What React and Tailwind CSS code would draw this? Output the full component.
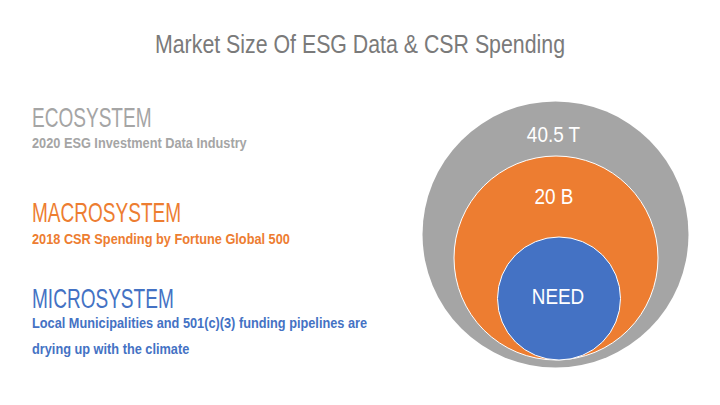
// App.jsx
import React from "react";

const font = { fontFamily: '"Liberation Sans", Arial, sans-serif' };

const Section = ({ title, color, topGap, subGap, children }) => (
  <div className={topGap}>
    <h2 className={`origin-left scale-x-[0.68] text-[28px] leading-none font-normal whitespace-nowrap ${color}`}>
      {title}
    </h2>
    <div className={`origin-left scale-x-[0.85] text-[15px] font-bold whitespace-nowrap ${subGap} ${color}`}>
      {children}
    </div>
  </div>
);

const Label = ({ x, y, children }) => (
  <g transform={`translate(${x} ${y}) scale(0.86 1)`}>
    <text x="0" y="0" textAnchor="middle" fill="#ffffff" fontSize="22" style={font}>
      {children}
    </text>
  </g>
);

export default function App() {
  return (
    <div className="w-[720px] h-[405px] bg-white flex flex-col overflow-hidden" style={font}>
      <h1 className="pt-[31px] origin-center scale-x-[0.82] text-center text-[26px] leading-none font-normal text-[#7a7a7a] whitespace-nowrap">
        Market Size Of ESG Data &amp; CSR Spending
      </h1>

      <div className="mt-[43px] flex">
        <div className="pl-[32px] w-[400px] shrink-0">
          <Section title="ECOSYSTEM" color="text-[#a5a5a5]" topGap="mt-[4px]" subGap="mt-[3px] leading-none">
            2020 ESG Investment Data Industry
          </Section>
          <Section title="MACROSYSTEM" color="text-[#ed7d31]" topGap="mt-[49px]" subGap="mt-[4px] leading-none">
            2018 CSR Spending by Fortune Global 500
          </Section>
          <Section title="MICROSYSTEM" color="text-[#4472c4]" topGap="mt-[39px]" subGap="-mt-[3px] leading-[26px]">
            Local Municipalities and 501(c)(3) funding pipelines are
            <br />
            drying up with the climate
          </Section>
        </div>

        <svg width="270" height="270" viewBox="0 0 270 270" className="ml-[20px] shrink-0">
          <circle cx="135.5" cy="134.5" r="133" fill="#a5a5a5" />
          <circle cx="136" cy="158" r="102" fill="#ed7d31" stroke="#ffffff" strokeWidth="1" />
          <circle cx="139" cy="198.5" r="61.5" fill="#4472c4" stroke="#ffffff" strokeWidth="1" />
          <Label x="133.5" y="41.7">40.5 T</Label>
          <Label x="134" y="104.3">20 B</Label>
          <Label x="138" y="204">NEED</Label>
        </svg>
      </div>
    </div>
  );
}
